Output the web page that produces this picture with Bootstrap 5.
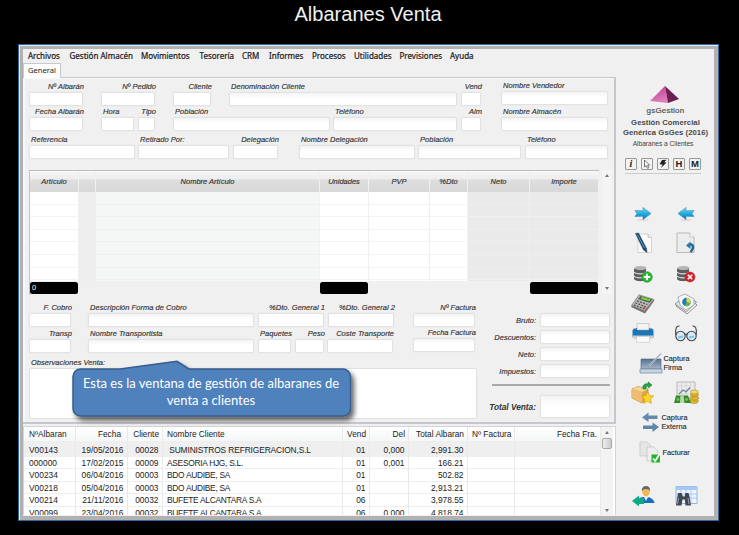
<!DOCTYPE html>
<html lang="es">
<head>
<meta charset="utf-8">
<title>Albaranes Venta</title>
<link rel="stylesheet" href="https://cdn.jsdelivr.net/npm/bootstrap@5.3.0/dist/css/bootstrap.min.css">
<style>
body{background:#000;width:739px;height:535px;overflow:hidden;font-family:"Liberation Sans",Arial,sans-serif;color:#333}
h1{height:44px;margin:0;padding-top:2px;padding-right:3px;font-size:20px;line-height:24px;font-weight:400;color:#f0f0f0;letter-spacing:.02px}
.win{width:701px;height:477px;margin-left:18px;border:1px solid #34679f;padding:1px 0 0 1px;background:#e4ecf4}
.frame{height:474px;border-style:solid;border-color:#b1b1b1;border-width:3px 4px 4px 3px;background:#f0f0f0}
.main{width:594px}
.menu{height:14px;font:8px/13px "Noto Sans","Open Sans",sans-serif;color:#222;padding-left:5px;display:grid;grid-template-columns:41.5px 71.5px 58.5px 42.5px 27px 43px 42px 45.5px 50.5px 40px;white-space:nowrap;-webkit-text-stroke:.22px #222}
.tabs{height:15px}
.tab-g{width:38px;height:15px;background:#fff;border:1px solid #c8c8d0;border-bottom:0;font:7.6px/13px "Noto Sans","Open Sans",sans-serif;color:#222;padding-left:4px;position:relative;z-index:1}
.panel{height:347px;margin-right:1px;margin-top:-1px;border:solid #c6c6ce;border-width:1px 2px 2px 0;padding:3px 0 0 6px;background:#f0f0f0;box-shadow:inset 2px 1px #f8f8f8}
.frow{display:grid;height:25px;white-space:nowrap}
.frow>:nth-child(2){grid-column:3}.frow>:nth-child(3){grid-column:5}.frow>:nth-child(4){grid-column:7}.frow>:nth-child(5){grid-column:9}.frow>:nth-child(6){grid-column:11}.frow>:nth-child(7){grid-column:13}
.fld{grid-row:1;display:flex;flex-direction:column;min-width:0;font-size:7.5px;font-style:italic;line-height:11px;-webkit-text-stroke:.15px #333;letter-spacing:.03px}
.fld>span{padding-left:2px;height:11px}
.fld.r>span{align-self:flex-end;margin-right:-1px;padding:0}
.fld.up{margin-top:-1px}
.box,.fld>i{height:14px;background:#fff;border:1px solid #e2e2e2;border-radius:2px;box-shadow:0 0 0 .5px #e9e9e9}
.fld.g>i,.box{background:linear-gradient(#f4f4f4,#fff 45%,#fff)}
.r1{grid-template-columns:54px 18px 54px 18px 38px 18px 228px 4px 20px 20px 107px}
.r2{grid-template-columns:54px 18px 33px 4px 17px 18px 157px 3px 124px 4px 20px 20px 107px}
.r3{grid-template-columns:106px 3px 91px 4px 45px 21px 116px 3px 103px 4px 83px;margin-top:3px}
.r4{grid-template-columns:42px 17px 166px 4px 66px 4px 66px 19px 62px;height:26px}
.r5{grid-template-columns:42px 17px 166px 4px 33px 4px 29px 3px 66px 20px 62px}
.r5 .fld.last>span,.r4 .fld.last>span{letter-spacing:0}
.lines{margin-top:11px;height:125px}
.dg{width:570px;height:125px;border-top:1px solid #bdbdbd;border-left:1px solid #c4c4c4;display:grid;grid-template-columns:48px 16px 223px 48px 60px 37px 61px 68px;grid-template-rows:21px 89px 13px;column-gap:1px;font-size:7.5px;font-style:italic;-webkit-text-stroke:.15px #333}
.hd{background:linear-gradient(#f4f4f4 1px,#ededed 7px,#dedede 8px,#d8d8d8);text-align:center;line-height:19px;border-top:1px solid #fafafa}
.bd{background:repeating-linear-gradient(#fff 0 11.6px,#f3f4f4 11.6px 12.6px)}
.bd.n{background:repeating-linear-gradient(#f5f7f6 0 11.6px,#eff1f0 11.6px 12.6px)}
.bd.d{background:repeating-linear-gradient(#eaeaea 0 11.6px,#eee 11.6px 12.6px)}
.bd.e{background:#eee}
.tot{background:#000;border-radius:2.5px;color:#fff;font:7.5px/12px "Liberation Sans",sans-serif;padding-left:2px;height:12px;margin-top:1px;-webkit-text-stroke:0}
.sb{width:10px;height:124px;margin-left:3px;background:#f4f4f4}
.arr{display:block;width:0;height:0;border:2.5px solid transparent;border-bottom:3px solid #777;border-top:0}
.arr.dn{border-top:3px solid #777;border-bottom:0}
.low{margin-top:7px}
.left{width:448px}
.obs{height:51px;background:#fff;border:1px solid #e0e0e0;border-radius:2px}
.sums{width:118px;margin-left:15px;padding-top:11px;font-size:7.5px;font-style:italic;-webkit-text-stroke:.15px #333}
.sum{display:grid;grid-template-columns:44px 70px;column-gap:4px;text-align:right;line-height:15px;height:14px;margin-bottom:3px}
.sum.b{height:23px;line-height:24px;font-weight:700;font-size:8.3px;-webkit-text-stroke:0;white-space:nowrap}
.sum.b .box{height:23px}.sum.b span{margin-left:-6px}
.rule{height:2px;background:#aaa;margin:6px 0 9px}
.callout{left:71px;top:360px;width:290px;height:66px}
.callout p{left:1px;top:9px;width:278px;height:47px;color:#fff;font:13px/17px Lato,"Open Sans",sans-serif;padding-top:6px;text-align:center;white-space:nowrap}
.list{width:593px;height:89px;margin-top:2px;border:1px solid #d4d4d8;border-bottom:0;overflow:hidden;background:#fff}
.lr{display:grid;grid-template-columns:52px 52px 35px 180px 27px 39px 59px 47px 86px;height:12.6px;line-height:13px;font-size:8.4px;white-space:nowrap;color:#222;border-bottom:1px solid #eee}
.lr>span{border-right:1px solid #e9e9e9;padding:0 3.5px 0 4px}
.lr>:nth-child(1){padding-left:5px}
.lr>:nth-child(2),.lr>:nth-child(3),.lr>:nth-child(5),.lr>:nth-child(6),.lr>:nth-child(7),.lr>:nth-child(9){text-align:right}
.lr>:nth-child(4){letter-spacing:-.28px;white-space:pre}
.lr.h{height:14.6px;line-height:14px;background:linear-gradient(#fff,#f5f6f7);font-size:8.3px}
.lr.h>span{padding-right:3px}.lr.h>:nth-child(4){letter-spacing:0}.lr.h>:nth-child(2){padding-right:6px}
.lr.sel{background:#efefef;height:15px;line-height:16px}
.lr.sel>:nth-child(4){letter-spacing:-.12px}
.lsb{width:12px;background:#f3f3f3;padding:4px 0 3px}
.thumb{width:10px;height:11px;background:linear-gradient(90deg,#eee,#ccc);border:1px solid #aaa;border-radius:2px;margin-top:4px}
.side{width:97px;padding-top:37px}
.side svg{display:block}
.brand{font-size:8px;line-height:9px;color:#555;margin-top:3px;-webkit-text-stroke:.2px #555;letter-spacing:.2px}
.ttl{font-size:7.7px;font-weight:700;line-height:9.5px;color:#4a4a4a;margin-top:3px;white-space:nowrap;letter-spacing:.05px}
.sub{font-size:6.7px;line-height:10px;margin:2px 5px 0 0;color:#444;white-space:nowrap;letter-spacing:-.05px}
.mini{width:76px;margin:9px 0 0 8px;border-bottom:1px solid #ccc;height:16px}
.mini span{width:12px;height:12px;border:1px solid #999;border-radius:1px;font:bold 9.5px/10px "Liberation Sans",sans-serif;text-align:center;color:#222;background:#f3f3f3}
.mini .it{font:italic bold 10px/10px "Liberation Serif",serif}
.tools{margin:25px 0 0 4.5px;width:86px;display:grid;grid-template-columns:43px 43px;grid-template-rows:29px 29px 33px 27px 31px 30px 30px 28px 32px 12px 32px;align-items:center;justify-items:center}
.wide{grid-column:1/3;justify-self:start;display:flex;align-items:center;font-size:7.3px;line-height:9px;color:#222;margin-left:17px;-webkit-text-stroke:.1px #222}
.wide>span{margin-left:1px}
.gap{grid-column:1/3}
</style>
<script src="https://cdn.jsdelivr.net/npm/bootstrap@5.3.0/dist/js/bootstrap.bundle.min.js"></script>
</head>
<body class="position-relative">
<h1 class="text-center">Albaranes Venta</h1>
<div class="win"><div class="frame d-flex">
<div class="main">
<nav class="menu"><span>Archivos</span><span>Gestión Almacén</span><span>Movimientos</span><span>Tesorería</span><span>CRM</span><span>Informes</span><span>Procesos</span><span>Utilidades</span><span>Previsiones</span><span>Ayuda</span></nav>
<div class="tabs"><div class="tab-g">General</div></div>
<section class="panel">
<div class="frow r1">
<div class="fld r"><span>Nº Albarán</span><i></i></div><div class="fld r"><span>Nº Pedido</span><i></i></div><div class="fld r"><span>Cliente</span><i></i></div><div class="fld g"><span>Denominación Cliente</span><i></i></div><div class="fld r"><span>Vend</span><i></i></div><div class="fld g up"><span>Nombre Vendedor</span><i></i></div>
</div>
<div class="frow r2">
<div class="fld r"><span>Fecha Albarán</span><i></i></div><div class="fld"><span>Hora</span><i></i></div><div class="fld r"><span>Tipo</span><i></i></div><div class="fld g"><span>Población</span><i></i></div><div class="fld g"><span>Teléfono</span><i></i></div><div class="fld r"><span>Alm</span><i></i></div><div class="fld g"><span>Nombre Almacén</span><i></i></div>
</div>
<div class="frow r3">
<div class="fld"><span>Referencia</span><i></i></div><div class="fld"><span>Retirado Por:</span><i></i></div><div class="fld r"><span>Delegación</span><i></i></div><div class="fld g"><span>Nombre Delegación</span><i></i></div><div class="fld g"><span>Población</span><i></i></div><div class="fld g"><span>Teléfono</span><i></i></div>
</div>
<div class="lines d-flex">
<div class="dg">
<div class="hd">Artículo</div><div class="hd"></div><div class="hd">Nombre Artículo</div><div class="hd">Unidades</div><div class="hd">PVP</div><div class="hd">%Dto</div><div class="hd">Neto</div><div class="hd">Importe</div>
<div class="bd"></div><div class="bd e"></div><div class="bd n"></div><div class="bd"></div><div class="bd"></div><div class="bd"></div><div class="bd d"></div><div class="bd d"></div>
<div class="tot">0</div><div></div><div></div><div class="tot"></div><div></div><div></div><div></div><div class="tot"></div>
</div>
<div class="sb d-flex flex-column justify-content-between align-items-center py-1"><b class="arr"></b><b class="arr dn"></b></div>
</div>
<div class="low d-flex">
<div class="left">
<div class="frow r4"><div class="fld r"><span>F. Cobro</span><i></i></div><div class="fld g"><span>Descripción Forma de Cobro</span><i></i></div><div class="fld r"><span>%Dto. General 1</span><i></i></div><div class="fld r"><span>%Dto. General 2</span><i></i></div><div class="fld r g last"><span>Nº Factura</span><i></i></div></div>
<div class="frow r5"><div class="fld r"><span>Transp</span><i></i></div><div class="fld g"><span>Nombre Transportista</span><i></i></div><div class="fld r"><span>Paquetes</span><i></i></div><div class="fld r"><span>Peso</span><i></i></div><div class="fld r"><span>Coste Transporte</span><i></i></div><div class="fld r g up last"><span>Fecha Factura</span><i></i></div></div>
<div class="fld mt-1"><span>Observaciones Venta:</span></div>
<div class="obs"></div>
</div>
<div class="sums">
<div class="sum"><span>Bruto:</span><div class="box"></div></div>
<div class="sum"><span>Descuentos:</span><div class="box"></div></div>
<div class="sum"><span>Neto:</span><div class="box"></div></div>
<div class="sum"><span>Impuestos:</span><div class="box"></div></div>
<div class="rule"></div>
<div class="sum b"><span>Total Venta:</span><div class="box"></div></div>
</div>
</div>
</section>
<section class="list d-flex">
<div>
<div class="lr h"><span>NºAlbaran</span><span>Fecha</span><span>Cliente</span><span>Nombre Cliente</span><span>Vend</span><span>Del</span><span>Total Albaran</span><span>Nº Factura</span><span>Fecha Fra.</span></div>
<div class="lr sel"><span>V00143</span><span>19/05/2016</span><span>00028</span><span> SUMINISTROS REFRIGERACION,S.L</span><span>01</span><span>0,000</span><span>2,991.30</span><span></span><span></span></div>
<div class="lr"><span>000000</span><span>17/02/2015</span><span>00009</span><span>ASESORIA HJG, S.L.</span><span>01</span><span>0,001</span><span>166.21</span><span></span><span></span></div>
<div class="lr"><span>V00234</span><span>06/04/2016</span><span>00003</span><span>BDO AUDIBE, SA</span><span>01</span><span></span><span>502.82</span><span></span><span></span></div>
<div class="lr"><span>V00218</span><span>05/04/2016</span><span>00003</span><span>BDO AUDIBE, SA</span><span>01</span><span></span><span>2,913.21</span><span></span><span></span></div>
<div class="lr"><span>V00214</span><span>21/11/2016</span><span>00032</span><span>BUFETE ALCANTARA S.A</span><span>06</span><span></span><span>3,978.55</span><span></span><span></span></div>
<div class="lr"><span>V00099</span><span>23/04/2016</span><span>00032</span><span>BUFETE ALCANTARA S.A</span><span>06</span><span>0,000</span><span>4,818.74</span><span></span><span></span></div>
</div>
<div class="lsb d-flex flex-column align-items-center"><b class="arr"></b><div class="thumb"></div><b class="arr dn mt-auto"></b></div>
</section>
</div>
<aside class="side">
<svg width="30" height="17" viewBox="0 0 30 17" style="margin-left:33px"><defs><linearGradient id="py" x2=".3" y2="1"><stop stop-color="#b53a8b"/><stop offset="1" stop-color="#e07dbb"/></linearGradient></defs><path d="M15 0 0 15 18 17z" fill="url(#py)"/><path d="M15 0 18 17 29 13z" fill="#6e1c54"/></svg>
<div class="brand text-center">gsGestion</div>
<div class="ttl text-center">Gestión Comercial<br>Genérica GsGes (2016)</div>
<div class="sub text-center">Albaranes a Clientes</div>
<div class="mini d-flex justify-content-between"><span class="it">i</span><span><svg width="10" height="10" viewBox="0 0 10 10"><path d="M2.5 1v7l1.7-1.5L5.5 9.3l1.3-.6-1.2-2.6h2z" fill="#fff" stroke="#555" stroke-width=".8"/></svg></span><span><svg width="10" height="10" viewBox="0 0 10 10"><path d="M4 1 8.500 .8 6.300 3.200 8.500 3.500 3 9 4.500 5.500 1.500 5.300z" fill="#222"/></svg></span><span>H</span><span>M</span></div>
<div class="tools">
<svg width="18" height="16" viewBox="0 0 18 16"><defs><linearGradient id="bl" x2="0" y2="1"><stop stop-color="#7fdcf6"/><stop offset=".5" stop-color="#23aee2"/><stop offset="1" stop-color="#0b6fb0"/></linearGradient></defs><ellipse cx="9" cy="14" rx="6" ry="1.200" fill="#ddd"/><path d="M1 4.500 9 4.800V1.500L17 7.500 9 13.500V10.300L1 10.500 3 7.500z" fill="url(#bl)" stroke="#3c8db8" stroke-width=".6"/></svg>
<svg width="18" height="16" viewBox="0 0 18 16"><ellipse cx="9" cy="14" rx="6" ry="1.200" fill="#ddd"/><path d="M17 4.500 9 4.800V1.500L1 7.500 9 13.500V10.300L17 10.500 15 7.500z" fill="url(#bl)" stroke="#3c8db8" stroke-width=".6"/></svg>
<svg width="20" height="22" viewBox="0 0 20 22"><path d="M5 2H15L18.500 5.500V20.500H5z" fill="#fafafa" stroke="#ccc" stroke-width=".8"/><path d="M15 2V5.500H18.500" fill="#e4e4e4" stroke="#bbb" stroke-width=".6"/><path d="M2.500 1.500 5.500 1 13.500 16.500 14 20.500 10.500 18z" fill="#1f4f78" stroke="#163851" stroke-width=".5"/><path d="M4.500 3 11.500 16" stroke="#5c9cc7" stroke-width=".9"/></svg>
<svg width="20" height="22" viewBox="0 0 20 22"><path d="M1 1H14L18 5V20.500H1z" fill="#ececec" stroke="#b9b9b9"/><path d="M14 1V5H18" fill="#fff" stroke="#bbb" stroke-width=".8"/><path d="M14.500 20C19 15 16.500 11.500 13.500 12.500" fill="none" stroke="#1f6998" stroke-width="2.500"/><path d="M10 13.500 14.500 9.500V17z" fill="#237bb0"/></svg>
<svg width="20" height="18" viewBox="0 0 20 18"><path d="M1 3.500v10c0 3.500 12 3.500 12 0v-10z" fill="#5d5d5d"/><ellipse cx="7.500" cy="3" rx="6" ry="2" fill="#b5b5b5"/><path d="M1 7c2 2.500 10 2.500 12 0M1 11c2 2.500 10 2.500 12 0" fill="none" stroke="#ddd" stroke-width="1.100"/><circle cx="14" cy="12" r="5.300" fill="#29b733" stroke="#168824" stroke-width=".5"/><path d="M14 8.800v6.400M10.800 12h6.400" stroke="#fff" stroke-width="1.800"/></svg>
<svg width="20" height="18" viewBox="0 0 20 18"><path d="M1 3.500v10c0 3.500 12 3.500 12 0v-10z" fill="#5d5d5d"/><ellipse cx="7.500" cy="3" rx="6" ry="2" fill="#b5b5b5"/><path d="M1 7c2 2.500 10 2.500 12 0M1 11c2 2.500 10 2.500 12 0" fill="none" stroke="#ddd" stroke-width="1.100"/><circle cx="14" cy="12" r="5" fill="#d5222b" stroke="#9b1219" stroke-width=".5"/><path d="M11.800 9.800l4.400 4.400M16.200 9.800l-4.400 4.400" stroke="#fff" stroke-width="1.500"/></svg>
<svg width="24" height="20" viewBox="0 0 24 20"><path d="M8 1.500 23.500 6.500 14 19.500 0 13z" fill="#777"/><path d="M8 .8 23 5.500 13.500 17 .5 11.500z" fill="#b9b9b9" stroke="#666" stroke-width=".6"/><path d="M9.500 2 21.500 5.500 18.500 8.700 7 5z" fill="#506347"/><path d="M11 3 19.800 5.600 18 7.300 9.700 4.700z" fill="#7dd33c"/><path d="M6 6.800 16.500 10.500M4.300 8.800 14.800 12.800M2.800 10.800 13 14.900" stroke="#555" stroke-width="1.300" stroke-dasharray="2 1.200"/><path d="M12.500 13.500l1.800.7" stroke="#d33" stroke-width="1.800"/></svg>
<svg width="24" height="22" viewBox="0 0 24 22"><path d="M2 13 12 3 23 12 13 21z" fill="#fff" stroke="#777" stroke-width=".8"/><path d="M1 11 12 2 22.500 9 12.500 19z" fill="#e4e7e9" stroke="#777" stroke-width=".8"/><path d="M4 4 11 1 20 6 20 12 12 17 6 12z" fill="#f7f7f7" stroke="#8b949b" stroke-width=".7"/><circle cx="12.500" cy="9" r="4.300" fill="#2378bd"/><path d="M12.500 9V4.700a4.300 4.300 0 0 1 4 5.500z" fill="#e8db36"/><path d="M12.500 9l4 1.200a4.300 4.300 0 0 1-6 2.600z" fill="#61b843"/></svg>
<svg width="22" height="20" viewBox="0 0 22 20"><path d="M2 5.500H20L21.500 7V14H.5V7z" fill="#1b76ba"/><path d="M4 5H18V8H4z" fill="#0e548b"/><path d="M5 .5H17V7H5z" fill="#f3f3f3" stroke="#bbb" stroke-width=".7"/><path d="M.5 12.500H21.500V15.500H.5z" fill="#c7cdd1"/><path d="M4.500 13.500H17.500V19.300H4.500z" fill="#fafafa" stroke="#c9c9c9" stroke-width=".7"/></svg>
<svg width="24" height="18" viewBox="0 0 24 18"><g fill="#d3ebf8" stroke="#444" stroke-width="1.100"><circle cx="6.500" cy="12" r="4.700"/><circle cx="17.500" cy="12" r="4.700"/><path d="M10.800 11C11.500 9.800 12.500 9.800 13.200 11M1.800 11C1 5 2.500 1.500 5.500 2M22.200 11C23 5 21.500 1.500 18.500 2" fill="none"/></g><path d="M4 13.500l5-1M15 13.500l5-1" stroke="#80c5e9" stroke-width="2"/></svg>
<div class="wide"><svg width="24" height="22" viewBox="0 0 24 22"><defs><linearGradient id="sc" x2="0" y2="1"><stop stop-color="#57718f"/><stop offset="1" stop-color="#a6b7ca"/></linearGradient></defs><path d="M2 7H22V17H2z" fill="url(#sc)" stroke="#4e6681" stroke-width=".6"/><path d="M1 17H23V21H1z" fill="#c8d3de" stroke="#6f8aa6" stroke-width=".7"/><path d="M10 14 22 1.500" stroke="#ccd2d8" stroke-width="1.800"/><path d="M9.500 14.500 22 1.500" stroke="#68747f" stroke-width=".6"/></svg><span>Captura<br>Firma</span></div>
<svg width="24" height="24" viewBox="0 0 24 24"><path d="M1 8 7 5.500 17 8 17 17 11 22 1 17z" fill="#e0a64d" stroke="#a97022" stroke-width=".6"/><path d="M1 8 7 5.500 17 8 11 11z" fill="#f5d597"/><path d="M11 11V22L1 17V8z" fill="#efbd6d"/><path d="M12 8C11 4 14 2 17 3V.8L21 4 17.500 7V5.200C15 5 15 6 15 8z" fill="#2ba249" stroke="#11752e" stroke-width=".5"/><path d="M16.500 10.500l1.900 4 4.300.5-3.200 3 .9 4.400-3.900-2.200-3.800 2.200.8-4.400-3.200-3 4.400-.5z" fill="#ffd52b" stroke="#c98e0a" stroke-width=".6"/></svg>
<svg width="25" height="24" viewBox="0 0 25 24"><path d="M3 1H21V17H3z" fill="#ececec" stroke="#aaa" stroke-width=".8"/><path d="M3 5H21M3 9H21M3 13H21M7.500 1V17M12 1V17M16.500 1V17" stroke="#ccc" stroke-width=".6"/><path d="M5 13 9 9 12 11 16 6.500" fill="none" stroke="#71848f" stroke-width="1.200"/><g fill="#dab334" stroke="#a27b15" stroke-width=".5"><ellipse cx="20" cy="20" rx="4.300" ry="2.500"/><ellipse cx="20.500" cy="17" rx="4.200" ry="2.300"/><ellipse cx="20.500" cy="13.500" rx="4" ry="2.200"/><ellipse cx="20.500" cy="11" rx="3.800" ry="2" fill="#f4d96d"/></g><path d="M2 14.500H14L17 22H0z" fill="#38882c"/><path d="M6.500 14.500H9.500L10.500 22H6z" fill="#b2dea1"/><circle cx="4" cy="18.500" r="1.400" fill="#7bbf68"/><circle cx="12.500" cy="18.500" r="1.400" fill="#7bbf68"/></svg>
<div class="wide"><svg width="22" height="20" viewBox="0 0 22 20"><path d="M3 5.500 9.500 .5V3.500H18.500V7H9.500V10z" fill="#6489ac"/><path d="M20 15 13.500 10.500V13.500H4V17H13.500V20z" fill="#5d86ab"/></svg><span>Captura<br>Externa</span></div>
<div class="wide"><svg width="23" height="22" viewBox="0 0 23 22"><path d="M1 1H8L12 5V15H1z" fill="#e5e5e5" stroke="#c4c4c4" stroke-width=".7"/><path d="M8 6H15L19 10V20H8z" fill="#eee" stroke="#c0c0c0" stroke-width=".7"/><rect x="12.500" y="13.500" width="8.500" height="8" fill="#22b52c"/><path d="M14 17.500 16.200 20 20.500 13" fill="none" stroke="#fff" stroke-width="1.700"/></svg><span>Facturar</span></div>
<div class="gap"></div>
<svg width="23" height="22" viewBox="0 0 23 22"><path d="M6 16C7 12 10 12 13.500 12S21.500 13 22.500 18H6z" fill="#1570b8"/><path d="M11.500 11H16.500L14 16z" fill="#eef"/><ellipse cx="14" cy="6.500" rx="3.800" ry="5" fill="#f1b955"/><path d="M9.800 6C9 0 18.500-1 18.200 6 17 3.500 12 3 9.800 6z" fill="#666"/><path d="M0 16 7 10.500V13.500L12 13V19H7V21.500z" fill="#0daa83"/></svg>
<svg width="23" height="22" viewBox="0 0 23 22"><path d="M1 1.500H22V18.500H1z" fill="#eef5fe" stroke="#90b8ea"/><path d="M1 1.500H22V5H1z" fill="#a7c9f3"/><path d="M1 9H22M1 13H22M6 1V18M11 1V18M16 1V18" stroke="#9cc0ee" stroke-width=".8"/><path d="M3 8H6.500L8 11.500H9.500L10.500 8 13.500 8 14.500 11.500 16 20.500H10.500L9.800 14.500H7.500L6.500 20.500H1z" fill="#414852"/><path d="M3.500 13 2.500 19M13 13 14 19" stroke="#9aa2ac" stroke-width="1"/></svg>
</div>
</aside>
</div></div>
<div class="callout position-absolute">
<svg class="position-absolute top-0 start-0" width="296" height="68" viewBox="0 0 296 68"><defs><filter id="sh" x="-5%" y="-10%" width="112%" height="135%"><feDropShadow dx="3" dy="4" stdDeviation="2.500" flood-opacity=".6"/></filter></defs><path filter="url(#sh)" d="M9.500 9H49L106 1.300 118 9H272A7.500 7.500 0 0 1 279.500 16.500V48.500A7.500 7.500 0 0 1 272 56H9.500A7.500 7.500 0 0 1 2 48.500V16.500A7.500 7.500 0 0 1 9.500 9z" fill="#4f81bd" stroke="#385d8a" stroke-width="1.500"/></svg>
<p class="position-absolute m-0">Esta es la ventana de gestión de albaranes de<br>venta a clientes</p>
</div>
</body>
</html>
